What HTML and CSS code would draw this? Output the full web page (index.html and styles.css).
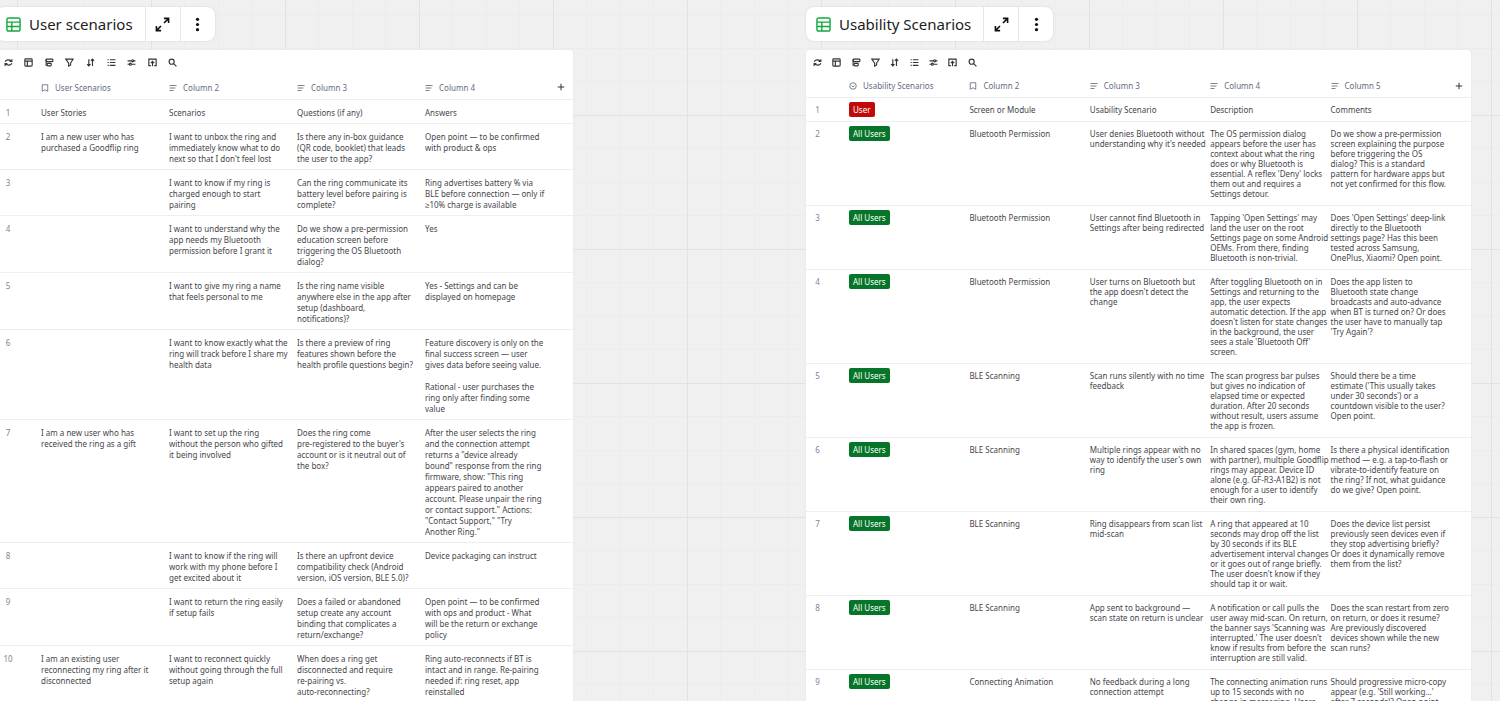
FILE: index.html
```
<!DOCTYPE html>
<html lang="en">
<head>
<meta charset="utf-8">
<title>Scenarios board</title>
<link rel="stylesheet" href="styles.css">
</head>
<body>
<svg class="sprite" aria-hidden="true">
  <symbol id="table" viewBox="0 0 16 16"><rect x="1" y="1" width="14" height="14" rx="2"/><path d="M1 5.500H15M1 10.200H15M6.200 5.500V15"/></symbol>
  <symbol id="expand" viewBox="0 0 16 16"><path d="M9.500 1.500H14.500V6.500M14.300 1.700L9.600 6.400M6.500 14.500H1.500V9.500M1.700 14.300L6.400 9.600"/></symbol>
  <symbol id="dots" viewBox="0 0 16 16"><g fill="currentColor" stroke="none"><circle cx="8" cy="2.500" r="1.700"/><circle cx="8" cy="8" r="1.700"/><circle cx="8" cy="13.500" r="1.700"/></g></symbol>
  <symbol id="sync" viewBox="0 0 16 16"><path d="M2 6.500C3.500 3 9.500 2 13 5.500M14 2V6H10M14 9.500C12.500 13 6.500 14 3 10.500M2 14V10H6"/></symbol>
  <symbol id="layout" viewBox="0 0 16 16"><rect x="1.500" y="1.500" width="13" height="13" rx="1.500"/><path d="M1.500 5.500H14.500M6 5.500V14.500"/></symbol>
  <symbol id="group" viewBox="0 0 16 16"><rect x="2" y="2" width="12" height="4.500" rx="1"/><path d="M2 2V14"/><rect x="4" y="9.500" width="7" height="4.500" rx="1"/></symbol>
  <symbol id="filter" viewBox="0 0 16 16"><path d="M1.500 2H14.500L10 9V12.500L6.500 14.500V9Z"/></symbol>
  <symbol id="sort" viewBox="0 0 16 16"><path d="M5 2V14M2 11L5 14L8 11M11.500 14V2M8.500 5L11.500 2L14.500 5"/></symbol>
  <symbol id="list" viewBox="0 0 16 16"><path d="M5 3H15M5 8H15M5 13H15M1 3H3M1 8H3M1 13H3"/></symbol>
  <symbol id="sliders" viewBox="0 0 16 16"><path d="M1 5H8M12 5H15M1 11H4M8 11H15"/><circle cx="10" cy="5" r="1.800"/><circle cx="6" cy="11" r="1.800"/></symbol>
  <symbol id="upload" viewBox="0 0 16 16"><path d="M5 13.500H1.500V2H14.500V13.500H11M8 14.500V6.500M5 9L8 6L11 9"/></symbol>
  <symbol id="search" viewBox="0 0 16 16"><circle cx="6.500" cy="6.500" r="4.500"/><path d="M10 10L15 15"/></symbol>
  <symbol id="bookmark" viewBox="0 0 16 16"><path d="M2.500 1.500H13.500V14.500L8 11.500L2.500 14.500Z"/></symbol>
  <symbol id="text" viewBox="0 0 16 16"><path d="M1 3H15M1 8H13M1 13H9"/></symbol>
  <symbol id="select" viewBox="0 0 16 16"><circle cx="8" cy="8" r="6.500"/><path d="M5 7L8 10L11 7"/></symbol>
  <symbol id="plus" viewBox="0 0 16 16"><path d="M8 1.500V14.500M1.500 8H14.500"/></symbol>
</svg>
<main class="board">
  <section class="widget widget-left">
    <header class="chip">
      <h2 class="chip-title"><svg class="icon icon-table"><use href="#table"/></svg>User scenarios</h2>
      <button class="chip-button" aria-label="Expand"><svg class="icon"><use href="#expand"/></svg></button>
      <button class="chip-button" aria-label="More"><svg class="icon"><use href="#dots"/></svg></button>
    </header>
    <div class="panel">
      <div class="toolbar">
        <button class="tool" aria-label="Sync"><svg class="icon"><use href="#sync"/></svg></button>
        <button class="tool" aria-label="Layout"><svg class="icon"><use href="#layout"/></svg></button>
        <button class="tool" aria-label="Group"><svg class="icon"><use href="#group"/></svg></button>
        <button class="tool" aria-label="Filter"><svg class="icon"><use href="#filter"/></svg></button>
        <button class="tool" aria-label="Sort"><svg class="icon"><use href="#sort"/></svg></button>
        <button class="tool" aria-label="Row height"><svg class="icon"><use href="#list"/></svg></button>
        <button class="tool" aria-label="Fields"><svg class="icon"><use href="#sliders"/></svg></button>
        <button class="tool" aria-label="Export"><svg class="icon"><use href="#upload"/></svg></button>
        <button class="tool" aria-label="Search"><svg class="icon"><use href="#search"/></svg></button>
      </div>
      <table class="grid">
        <colgroup><col class="col-number"><col><col><col><col><col class="col-add"></colgroup>
        <thead>
          <tr>
            <td></td>
            <th scope="col"><svg class="icon"><use href="#bookmark"/></svg>User Scenarios</th>
            <th scope="col"><svg class="icon"><use href="#text"/></svg>Column 2</th>
            <th scope="col"><svg class="icon"><use href="#text"/></svg>Column 3</th>
            <th scope="col"><svg class="icon"><use href="#text"/></svg>Column 4</th>
            <td class="add-cell"><button class="add" aria-label="Add column"><svg class="icon"><use href="#plus"/></svg></button></td>
          </tr>
        </thead>
        <tbody>
          <tr><th scope="row">1</th><td>User Stories</td><td>Scenarios</td><td>Questions (if any)</td><td>Answers</td><td></td></tr>
          <tr><th scope="row">2</th><td>I am a new user who has
purchased a Goodflip ring</td><td>I want to unbox the ring and
immediately know what to do
next so that I don't feel lost</td><td>Is there any in-box guidance
(QR code, booklet) that leads
the user to the app?</td><td>Open point — to be confirmed
with product &amp; ops</td><td></td></tr>
          <tr><th scope="row">3</th><td></td><td>I want to know if my ring is
charged enough to start
pairing</td><td>Can the ring communicate its
battery level before pairing is
complete?</td><td>Ring advertises battery % via
BLE before connection — only if
≥10% charge is available</td><td></td></tr>
          <tr><th scope="row">4</th><td></td><td>I want to understand why the
app needs my Bluetooth
permission before I grant it</td><td>Do we show a pre-permission
education screen before
triggering the OS Bluetooth
dialog?</td><td>Yes</td><td></td></tr>
          <tr><th scope="row">5</th><td></td><td>I want to give my ring a name
that feels personal to me</td><td>Is the ring name visible
anywhere else in the app after
setup (dashboard,
notifications)?</td><td>Yes - Settings and can be
displayed on homepage</td><td></td></tr>
          <tr><th scope="row">6</th><td></td><td>I want to know exactly what the
ring will track before I share my
health data</td><td>Is there a preview of ring
features shown before the
health profile questions begin?</td><td>Feature discovery is only on the
final success screen — user
gives data before seeing value.

Rational - user purchases the
ring only after finding some
value</td><td></td></tr>
          <tr><th scope="row">7</th><td>I am a new user who has
received the ring as a gift</td><td>I want to set up the ring
without the person who gifted
it being involved</td><td>Does the ring come
pre-registered to the buyer's
account or is it neutral out of
the box?</td><td>After the user selects the ring
and the connection attempt
returns a "device already
bound" response from the ring
firmware, show: "This ring
appears paired to another
account. Please unpair the ring
or contact support." Actions:
"Contact Support," "Try
Another Ring."</td><td></td></tr>
          <tr><th scope="row">8</th><td></td><td>I want to know if the ring will
work with my phone before I
get excited about it</td><td>Is there an upfront device
compatibility check (Android
version, iOS version, BLE 5.0)?</td><td>Device packaging can instruct</td><td></td></tr>
          <tr><th scope="row">9</th><td></td><td>I want to return the ring easily
if setup fails</td><td>Does a failed or abandoned
setup create any account
binding that complicates a
return/exchange?</td><td>Open point — to be confirmed
with ops and product - What
will be the return or exchange
policy</td><td></td></tr>
          <tr><th scope="row">10</th><td>I am an existing user
reconnecting my ring after it
disconnected</td><td>I want to reconnect quickly
without going through the full
setup again</td><td>When does a ring get
disconnected and require
re-pairing vs.
auto-reconnecting?</td><td>Ring auto-reconnects if BT is
intact and in range. Re-pairing
needed if: ring reset, app
reinstalled</td><td></td></tr>
        </tbody>
      </table>
    </div>
  </section>

  <section class="widget widget-right">
    <header class="chip">
      <h2 class="chip-title"><svg class="icon icon-table"><use href="#table"/></svg>Usability Scenarios</h2>
      <button class="chip-button" aria-label="Expand"><svg class="icon"><use href="#expand"/></svg></button>
      <button class="chip-button" aria-label="More"><svg class="icon"><use href="#dots"/></svg></button>
    </header>
    <div class="panel">
      <div class="toolbar">
        <button class="tool" aria-label="Sync"><svg class="icon"><use href="#sync"/></svg></button>
        <button class="tool" aria-label="Layout"><svg class="icon"><use href="#layout"/></svg></button>
        <button class="tool" aria-label="Group"><svg class="icon"><use href="#group"/></svg></button>
        <button class="tool" aria-label="Filter"><svg class="icon"><use href="#filter"/></svg></button>
        <button class="tool" aria-label="Sort"><svg class="icon"><use href="#sort"/></svg></button>
        <button class="tool" aria-label="Row height"><svg class="icon"><use href="#list"/></svg></button>
        <button class="tool" aria-label="Fields"><svg class="icon"><use href="#sliders"/></svg></button>
        <button class="tool" aria-label="Export"><svg class="icon"><use href="#upload"/></svg></button>
        <button class="tool" aria-label="Search"><svg class="icon"><use href="#search"/></svg></button>
      </div>
      <table class="grid">
        <colgroup><col class="col-number"><col><col><col><col><col><col class="col-add"></colgroup>
        <thead>
          <tr>
            <td></td>
            <th scope="col"><svg class="icon"><use href="#select"/></svg>Usability Scenarios</th>
            <th scope="col"><svg class="icon"><use href="#bookmark"/></svg>Column 2</th>
            <th scope="col"><svg class="icon"><use href="#text"/></svg>Column 3</th>
            <th scope="col"><svg class="icon"><use href="#text"/></svg>Column 4</th>
            <th scope="col"><svg class="icon"><use href="#text"/></svg>Column 5</th>
            <td class="add-cell"><button class="add" aria-label="Add column"><svg class="icon"><use href="#plus"/></svg></button></td>
          </tr>
        </thead>
        <tbody>
          <tr><th scope="row">1</th><td class="tag-cell"><span class="tag tag-red">User</span></td><td>Screen or Module</td><td>Usability Scenario</td><td>Description</td><td>Comments</td><td></td></tr>
          <tr><th scope="row">2</th><td class="tag-cell"><span class="tag">All Users</span></td><td>Bluetooth Permission</td><td>User denies Bluetooth without
understanding why it's needed</td><td>The OS permission dialog
appears before the user has
context about what the ring
does or why Bluetooth is
essential. A reflex 'Deny' locks
them out and requires a
Settings detour.</td><td>Do we show a pre-permission
screen explaining the purpose
before triggering the OS
dialog? This is a standard
pattern for hardware apps but
not yet confirmed for this flow.</td><td></td></tr>
          <tr><th scope="row">3</th><td class="tag-cell"><span class="tag">All Users</span></td><td>Bluetooth Permission</td><td>User cannot find Bluetooth in
Settings after being redirected</td><td>Tapping 'Open Settings' may
land the user on the root
Settings page on some Android
OEMs. From there, finding
Bluetooth is non-trivial.</td><td>Does 'Open Settings' deep-link
directly to the Bluetooth
settings page? Has this been
tested across Samsung,
OnePlus, Xiaomi? Open point.</td><td></td></tr>
          <tr><th scope="row">4</th><td class="tag-cell"><span class="tag">All Users</span></td><td>Bluetooth Permission</td><td>User turns on Bluetooth but
the app doesn't detect the
change</td><td>After toggling Bluetooth on in
Settings and returning to the
app, the user expects
automatic detection. If the app
doesn't listen for state changes
in the background, the user
sees a stale 'Bluetooth Off'
screen.</td><td>Does the app listen to
Bluetooth state change
broadcasts and auto-advance
when BT is turned on? Or does
the user have to manually tap
'Try Again'?</td><td></td></tr>
          <tr><th scope="row">5</th><td class="tag-cell"><span class="tag">All Users</span></td><td>BLE Scanning</td><td>Scan runs silently with no time
feedback</td><td>The scan progress bar pulses
but gives no indication of
elapsed time or expected
duration. After 20 seconds
without result, users assume
the app is frozen.</td><td>Should there be a time
estimate ('This usually takes
under 30 seconds') or a
countdown visible to the user?
Open point.</td><td></td></tr>
          <tr><th scope="row">6</th><td class="tag-cell"><span class="tag">All Users</span></td><td>BLE Scanning</td><td>Multiple rings appear with no
way to identify the user's own
ring</td><td>In shared spaces (gym, home
with partner), multiple Goodflip
rings may appear. Device ID
alone (e.g. GF-R3-A1B2) is not
enough for a user to identify
their own ring.</td><td>Is there a physical identification
method — e.g. a tap-to-flash or
vibrate-to-identify feature on
the ring? If not, what guidance
do we give? Open point.</td><td></td></tr>
          <tr><th scope="row">7</th><td class="tag-cell"><span class="tag">All Users</span></td><td>BLE Scanning</td><td>Ring disappears from scan list
mid-scan</td><td>A ring that appeared at 10
seconds may drop off the list
by 30 seconds if its BLE
advertisement interval changes
or it goes out of range briefly.
The user doesn't know if they
should tap it or wait.</td><td>Does the device list persist
previously seen devices even if
they stop advertising briefly?
Or does it dynamically remove
them from the list?</td><td></td></tr>
          <tr><th scope="row">8</th><td class="tag-cell"><span class="tag">All Users</span></td><td>BLE Scanning</td><td>App sent to background —
scan state on return is unclear</td><td>A notification or call pulls the
user away mid-scan. On return,
the banner says 'Scanning was
interrupted.' The user doesn't
know if results from before the
interruption are still valid.</td><td>Does the scan restart from zero
on return, or does it resume?
Are previously discovered
devices shown while the new
scan runs?</td><td></td></tr>
          <tr><th scope="row">9</th><td class="tag-cell"><span class="tag">All Users</span></td><td>Connecting Animation</td><td>No feedback during a long
connection attempt</td><td>The connecting animation runs
up to 15 seconds with no
change in messaging. Users</td><td>Should progressive micro-copy
appear (e.g. 'Still working…'
after 7 seconds)? Open point.</td><td></td></tr>
        </tbody>
      </table>
    </div>
  </section>
</main>
</body>
</html>
```
FILE: styles.css
```
* { box-sizing: border-box; }

body {
  margin: 0;
  height: 100vh;
  overflow: hidden;
  font-family: "Noto Sans", sans-serif;
  color: #46464b;
  background-color: #f0f0f0;
  background-image:
    linear-gradient(to right, #e1e2e2 1px, transparent 1px),
    linear-gradient(to bottom, #e1e2e2 1px, transparent 1px),
    linear-gradient(to right, transparent 33px, #ebecec 33px 34px, transparent 34px 67px, #ebecec 67px 68px, transparent 68px 100px, #ebecec 100px 101px, transparent 101px),
    linear-gradient(to bottom, transparent 33px, #ebecec 33px 34px, transparent 34px 67px, #ebecec 67px 68px, transparent 68px 100px, #ebecec 100px 101px, transparent 101px);
  background-size: 134px 134px;
  background-position: 17px 115px;
}

.sprite { display: none; }

.icon {
  width: 8px;
  height: 8px;
  flex: none;
  fill: none;
  stroke: currentColor;
  stroke-width: 2;
}

.board {
  display: grid;
  grid-template-columns: 573fr 665fr;
  column-gap: 233px;
  padding: 7px 29px 0 0;
  align-items: start;
}

.widget {
  --line: 10px;
  --pad-bottom: 6px;
  --number: 35px;
  --gutter: 12px;
  --tools: 174px;
  --head: 23px;
}

.widget-left {
  --line: 11px;
  --pad-bottom: 5px;
  --number: 37px;
  --gutter: 13px;
  --tools: 185px;
  --head: 25px;
  margin-left: -4px;
}

.chip {
  display: flex;
  width: max-content;
  height: 34px;
  margin-bottom: 9px;
  background: #fff;
  border-radius: 8px;
  box-shadow: 0 0 2px #c9ced4;
}

.chip-title {
  display: flex;
  align-items: center;
  gap: 8px;
  margin: 0;
  padding: 0 12px 0 10px;
  font-size: 15px;
  font-weight: 400;
  color: #1c1c1e;
}

.icon-table { width: 15px; height: 15px; color: #12a93c; stroke-width: 1.500; }

.chip-button {
  display: flex;
  align-items: center;
  justify-content: center;
  width: 35px;
  padding: 0;
  border: 0;
  border-left: 1px solid #e3e7ec;
  background: none;
  color: #111;
}

.chip-button .icon { width: 15px; height: 15px; stroke-width: 1.700; }

.panel {
  background: #fff;
  border-radius: 4px;
  box-shadow: 0 0 2px #dfe1e4;
}

.toolbar {
  display: grid;
  grid-template-columns: repeat(9, 1fr);
  align-items: center;
  width: var(--tools);
  height: 25px;
  margin-left: 2px;
}

.tool, .add {
  display: flex;
  align-items: center;
  justify-content: center;
  height: 20px;
  padding: 0;
  border: 0;
  background: none;
  color: #333338;
}

.tool .icon { width: 9px; height: 9px; }

.add { width: 16px; }

.grid {
  width: 100%;
  table-layout: fixed;
  border-collapse: separate;
  border-spacing: 0;
  font-size: 8px;
  line-height: var(--line);
}

.col-number { width: var(--number); }
.col-add { width: 28px; }

.grid th, .grid td {
  padding: 7px 0 var(--pad-bottom) 8px;
  border-bottom: 1px solid #eceef0;
  text-align: left;
  vertical-align: top;
  font-weight: 400;
  white-space: pre;
}

.grid thead th, .grid thead td {
  height: var(--head);
  padding-top: 0;
  padding-bottom: 0;
  vertical-align: middle;
  color: #656b81;
}

.grid thead th .icon { margin-right: 6px; vertical-align: -1px; stroke-width: 1.700; }

.grid tbody th {
  padding-left: 0;
  padding-right: var(--gutter);
  text-align: center;
  color: #7d8397;
}

.grid .tag-cell { padding-top: 4px; padding-bottom: 4px; }

.tag {
  display: block;
  width: max-content;
  padding: 0 4px;
  border-radius: 2px;
  line-height: 15px;
  color: #fff;
  background: #067429;
}

.tag-red { background: #c00a0a; }
```
